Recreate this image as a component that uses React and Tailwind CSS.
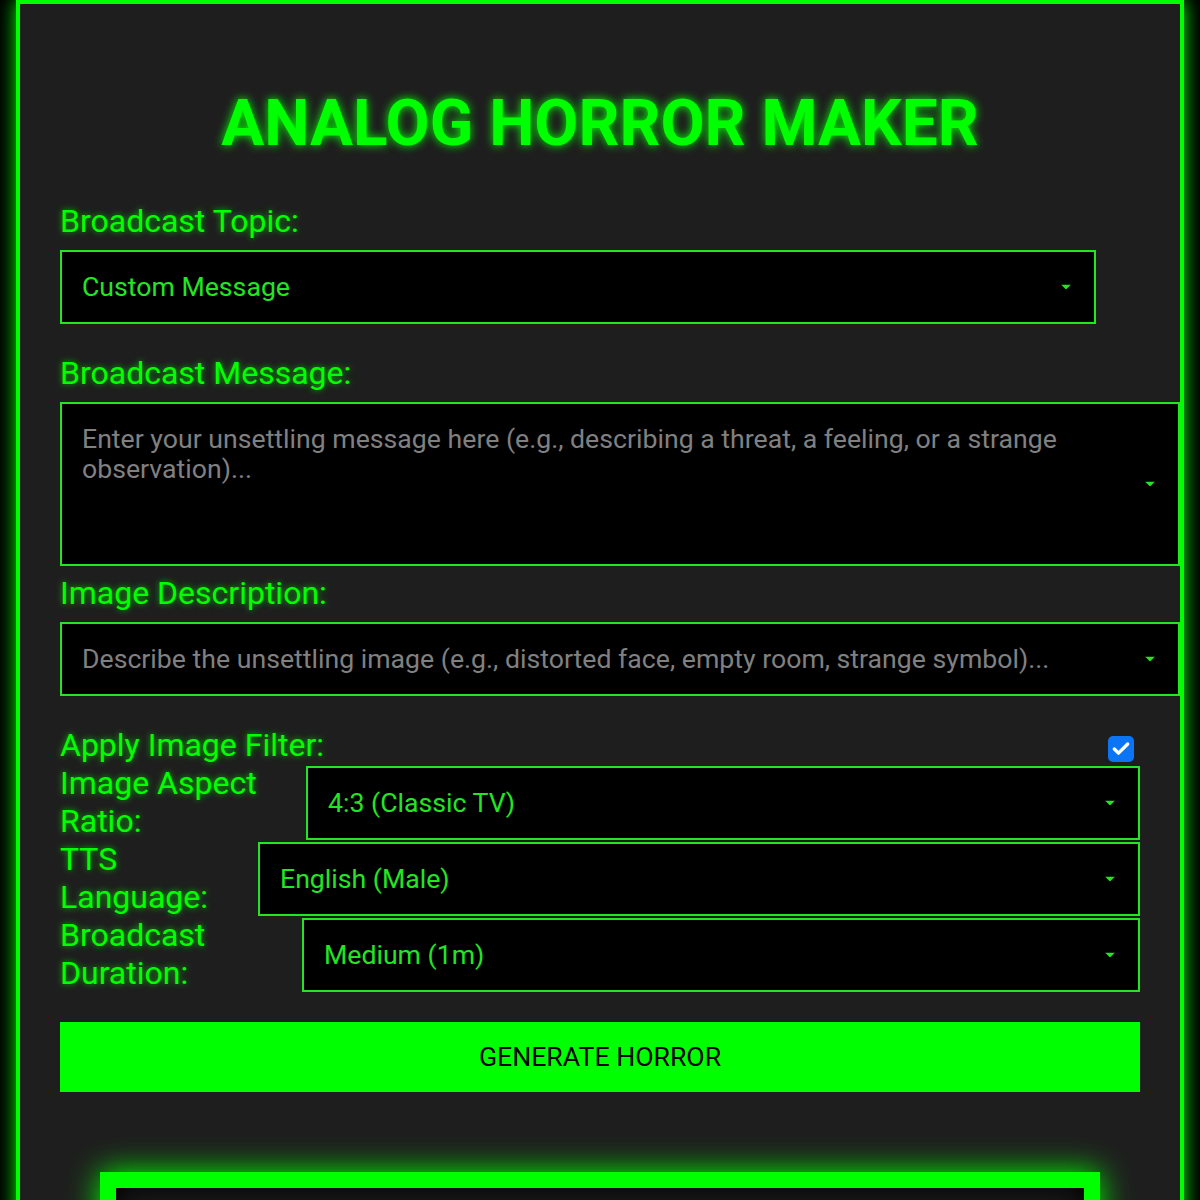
import { Check } from 'lucide-react'

function Arrow({ className = 'right-[23px]' }) {
  return (
    <svg width="10" height="5" viewBox="0 0 10 5" className={`absolute top-1/2 -translate-y-1/2 ${className}`}>
      <polygon points="0,0 10,0 5,5" fill="#22e622" />
    </svg>
  )
}

function Label({ children, className = '' }) {
  return (
    <div className={`text-[32px] leading-[38px] text-[#00ff00] [text-shadow:0_0_6px_rgba(0,255,0,0.7)] ${className}`}>
      {children}
    </div>
  )
}

function FakeSelect({ value, className = '' }) {
  return (
    <div className={`relative h-[74px] flex items-center border-2 border-[#22e622] bg-black px-5 text-[26.67px] text-[#22e622] ${className}`}>
      <span>{value}</span>
      <Arrow />
    </div>
  )
}

function Row({ label, labelWidth, value }) {
  return (
    <div className="flex h-[76px] items-start">
      <Label className={`-mt-[2px] ${labelWidth}`}>{label}</Label>
      <FakeSelect value={value} className="flex-1" />
    </div>
  )
}

export default function App() {
  return (
    <div className="min-h-screen bg-black font-['Roboto','Liberation_Sans',sans-serif]">
      <div className="mx-4 border-4 border-[#00ff00] bg-[#1e1e1e] px-10 pt-10 pb-20 shadow-[0_0_18px_#00ff00]">
        {/* Title */}
        <h1 className="mt-[42px] text-center text-[64px] leading-[75px] font-bold text-[#00ff00] [text-shadow:0_0_10px_#00ff00]">
          ANALOG HORROR MAKER
        </h1>

        {/* Topic */}
        <Label className="mt-[41px]">Broadcast Topic:</Label>
        <FakeSelect value="Custom Message" className="mt-[10px] w-[1036px]" />

        {/* Message */}
        <Label className="mt-[30px]">Broadcast Message:</Label>
        <div className="relative mt-[10px] w-[1120px]">
          <textarea
            placeholder="Enter your unsettling message here (e.g., describing a threat, a feeling, or a strange observation)..."
            className="block h-[164px] w-full resize-none border-2 border-[#22e622] bg-black px-5 pt-[20px] pb-[18px] pr-14 text-[26.67px] leading-[30px] text-[#22e622] outline-none placeholder:text-[#808080]"
          />
          <Arrow className="right-[25px]" />
        </div>

        {/* Image description */}
        <Label className="mt-[8px]">Image Description:</Label>
        <div className="relative mt-[10px] w-[1120px]">
          <input
            placeholder="Describe the unsettling image (e.g., distorted face, empty room, strange symbol)..."
            className="block h-[74px] w-full border-2 border-[#22e622] bg-black px-5 text-[26.67px] text-[#22e622] outline-none placeholder:text-[#808080]"
          />
          <Arrow className="right-[25px]" />
        </div>

        {/* Filter */}
        <div className="mt-[32px] flex h-[38px] items-end justify-between">
          <Label className="relative -top-[2px]">Apply Image Filter:</Label>
          <div className="mr-[6px] mb-[4px] flex h-[26px] w-[26px] items-center justify-center rounded-[5px] bg-[#0b75f5]">
            <Check size={20} strokeWidth={4} color="#fff" />
          </div>
        </div>

        <Row label="Image Aspect Ratio:" labelWidth="w-[246px]" value="4:3 (Classic TV)" />
        <Row label="TTS Language:" labelWidth="w-[198px]" value="English (Male)" />
        <Row label="Broadcast Duration:" labelWidth="w-[242px]" value="Medium (1m)" />

        {/* Button */}
        <button className="mt-[28px] h-[70px] w-full bg-[#00ff00] text-[26.67px] text-black">
          GENERATE HORROR
        </button>

        {/* Output screen */}
        <div className="mx-10 mt-20 h-[400px] border-[16px] border-[#00ff00] bg-[#1a1a1a] shadow-[0_0_30px_#00ff00,inset_0_0_30px_#000]" />
      </div>
    </div>
  )
}
